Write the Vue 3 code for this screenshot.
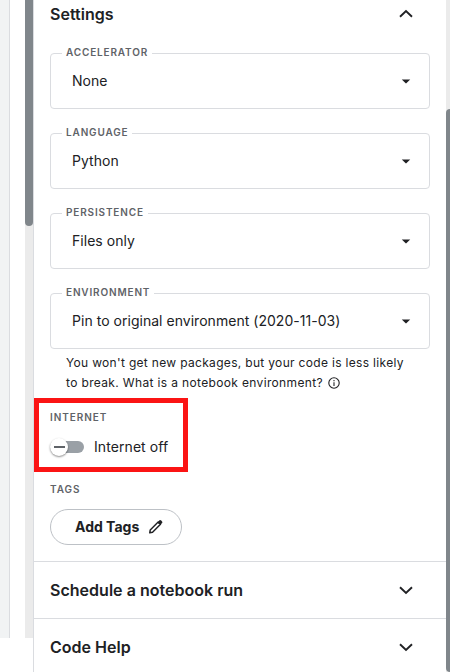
<script setup>
const fields = [
  { label: 'Accelerator', value: 'None' },
  { label: 'Language', value: 'Python' },
  { label: 'Persistence', value: 'Files only' },
  { label: 'Environment', value: 'Pin to original environment (2020-11-03)' },
]
const sections = ['Schedule a notebook run', 'Code Help']
</script>

<template>
  <div class="page">
    <div class="editor"></div>
    <div class="track"><div class="thumb"></div></div>
    <main class="panel">
      <header class="heading first">
        <h2>Settings</h2>
        <svg class="chevron" viewBox="0 0 16 16"><path d="M2 10.700 8 5l6 5.700" /></svg>
      </header>

      <div class="fields">
        <fieldset v-for="f in fields" :key="f.label" class="field">
          <legend><span>{{ f.label }}</span></legend>
          <div class="select">
            <span>{{ f.value }}</span>
            <svg class="caret" viewBox="0 0 10 5"><path d="M.8.5h8.400L5.600 4.100Q5 4.700 4.400 4.100Z" /></svg>
          </div>
        </fieldset>
      </div>

      <p class="help">
        You won't get new packages, but your code is less likely<br />
        <span class="second">to break. What is a notebook environment?</span>
        <svg class="info" viewBox="0 0 12 12">
          <circle cx="6" cy="6" r="5.200" />
          <path d="M6 5.300V9M6 3v1.200" />
        </svg>
      </p>

      <section class="internet">
        <h3>Internet</h3>
        <div class="toggle-row">
          <span class="toggle"><span class="knob"></span></span>
          <span class="toggle-label">Internet off</span>
        </div>
        <div class="highlight"></div>
      </section>

      <section class="tags">
        <h3>Tags</h3>
        <button class="add">
          <span>Add Tags</span>
          <svg class="pencil" viewBox="0 0 16 16">
            <path class="outline" d="M1.800 14.200 2.300 11.300 10.500 3.100 12.900 5.500 4.700 13.700Z" />
            <path class="tip" d="M9.700 3.600 11.900 1.400Q12.700.8 13.500 1.500L14.500 2.500Q15.200 3.300 14.600 4.100L12.400 6.300Z" />
          </svg>
        </button>
      </section>

      <header v-for="s in sections" :key="s" class="heading">
        <h2>{{ s }}</h2>
        <svg class="chevron" viewBox="0 0 16 16"><path d="M2 5.300 8 11l6-5.700" /></svg>
      </header>
    </main>
    <div class="page-track"><div class="page-thumb"></div></div>
  </div>
</template>

<style>
body {
  margin: 0;
  background: #fff;
  overflow: hidden;
}
</style>

<style scoped>
* {
  box-sizing: border-box;
}
.page {
  display: flex;
  align-items: flex-start;
  width: 450px;
  height: 672px;
  overflow: hidden;
  font-family: Inter, "Liberation Sans", sans-serif;
  font-size: 14px;
  color: #202124;
}
.editor {
  width: 10px;
  height: 638px;
  background: #f1f3f4;
  border-right: 1px solid #dadce0;
}
.track {
  width: 8px;
  height: 638px;
  margin-left: 15px;
  background: #ebebeb;
}
.thumb {
  height: 226px;
  background: #80868b;
  border-radius: 0 0 4px 4px;
}
.panel {
  width: 413px;
  height: 672px;
  border-left: 1px solid #dadce0;
}
.heading {
  display: flex;
  align-items: center;
  justify-content: space-between;
  height: 57px;
  padding: 0 32px 1px 16px;
  border-top: 1px solid #dadce0;
}
.heading.first {
  height: 28px;
  padding-bottom: 0;
  border-top: 0;
}
h2 {
  margin: 0;
  font-size: 16px;
  line-height: 24px;
  font-weight: 600;
  letter-spacing: 0.02px;
}
.chevron {
  width: 16px;
  height: 16px;
  fill: none;
  stroke: #202124;
  stroke-width: 1.900;
}
.fields {
  display: flex;
  flex-direction: column;
  gap: 18px;
  padding: 19px 16px 0;
}
.field {
  width: 380px;
  height: 62px;
  margin: 0;
  padding: 0 0 0 11px;
  border: 1px solid #dadce0;
  border-radius: 4px;
}
legend {
  height: 12px;
  padding: 0 4px;
  font-size: 10px;
  line-height: 12px;
  font-weight: 600;
  letter-spacing: 0.85px;
  text-transform: uppercase;
  color: #5f6368;
}
legend span {
  display: block;
  margin-top: -1px;
}
.select {
  display: flex;
  align-items: center;
  justify-content: space-between;
  height: 44px;
  padding: 0 18px 0 10px;
  letter-spacing: 0.03px;
}
.select span {
  margin-top: -2px;
}
.caret {
  width: 10px;
  height: 5px;
  fill: #202124;
}
.help {
  margin: 4px 0 0 32px;
  font-size: 12px;
  line-height: 20px;
  letter-spacing: 0.32px;
  white-space: nowrap;
}
.second {
  letter-spacing: 0.35px;
}
.info {
  width: 12px;
  height: 12px;
  margin-left: 5px;
  vertical-align: -2px;
  fill: none;
  stroke: #202124;
  stroke-width: 1.100;
}
h3 {
  margin: 0;
  font-size: 10px;
  line-height: 12px;
  font-weight: 600;
  letter-spacing: 0.95px;
  text-transform: uppercase;
  color: #5f6368;
}
.internet {
  position: relative;
  height: 72px;
  margin-top: 18px;
  padding-left: 16px;
}
.toggle-row {
  display: flex;
  align-items: center;
  gap: 10px;
  height: 20px;
  margin-top: 14px;
}
.toggle {
  display: flex;
  align-items: center;
  width: 34px;
  height: 12px;
  border-radius: 6px;
  background: #9aa0a6;
}
.toggle-label {
  margin-top: -2px;
  letter-spacing: 0.08px;
}
.knob {
  display: flex;
  align-items: center;
  justify-content: center;
  width: 18px;
  height: 18px;
  border-radius: 50%;
  background: #fff;
  box-shadow: 0 1px 2px rgba(0, 0, 0, 0.45);
}
.knob::before {
  content: "";
  width: 11px;
  height: 2px;
  background: #5f6368;
}
.highlight {
  position: absolute;
  top: -13px;
  left: 0;
  width: 154px;
  height: 74px;
  border: 5px solid #fb1414;
}
.tags {
  height: 78px;
  padding-left: 16px;
}
.add {
  display: flex;
  align-items: center;
  gap: 9px;
  width: 132px;
  height: 36px;
  margin-top: 14px;
  padding: 0 0 0 24px;
  border: 1px solid #bdc1c6;
  border-radius: 18px;
  background: #fff;
  font: 700 14px/20px Inter, "Liberation Sans", sans-serif;
  color: #202124;
}
.pencil {
  width: 15.500px;
  height: 15.500px;
}
.outline {
  fill: none;
  stroke: #202124;
  stroke-width: 1.500;
  stroke-linejoin: round;
}
.tip {
  fill: #202124;
}
.page-track {
  width: 4px;
  height: 672px;
  padding-top: 109px;
  background: #ebebeb;
}
.page-thumb {
  height: 563px;
  background: #80868b;
  border-radius: 4px 0 0 4px;
}
</style>
